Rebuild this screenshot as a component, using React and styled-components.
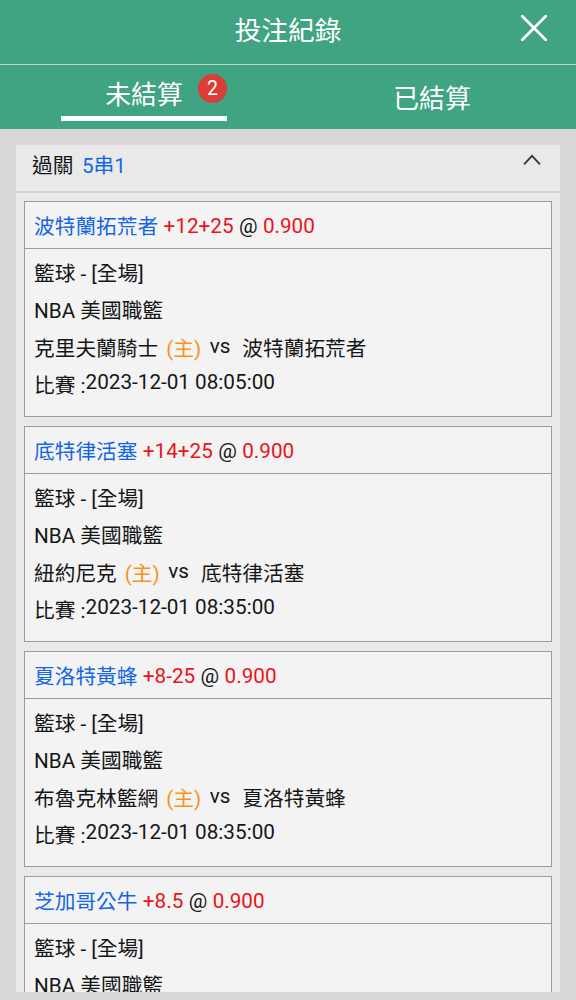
import React from 'react';
import styled, { createGlobalStyle } from 'styled-components';

const bets = [
  {
    id: 1,
    pick: '波特蘭拓荒者',
    handicap: '+12+25',
    odds: '0.900',
    home: '克里夫蘭騎士',
    time: '2023-12-01 08:05:00',
  },
  {
    id: 2,
    pick: '底特律活塞',
    handicap: '+14+25',
    odds: '0.900',
    home: '紐約尼克',
    time: '2023-12-01 08:35:00',
  },
  {
    id: 3,
    pick: '夏洛特黃蜂',
    handicap: '+8-25',
    odds: '0.900',
    home: '布魯克林籃網',
    time: '2023-12-01 08:35:00',
  },
  {
    id: 4,
    pick: '芝加哥公牛',
    handicap: '+8.5',
    odds: '0.900',
  },
];

const BetCard = ({ bet }) => {
  return (
    <StCard>
      <StCardTop>
        <StPick>{bet.pick}</StPick>
        <StText $color="#e8131b">{bet.handicap}</StText>
        <StText>@</StText>
        <StText $color="#e8131b">{bet.odds}</StText>
      </StCardTop>
      <StCardBody>
        <StLine>籃球 - [全場]</StLine>
        <StLine>NBA 美國職籃</StLine>
        {bet.home && (
          <StLine>
            {bet.home}
            <StHome>(主)</StHome>
            <StVs>vs</StVs>
            {bet.pick}
          </StLine>
        )}
        {bet.time && (
          <StLine>
            比賽 :<StTime>{bet.time}</StTime>
          </StLine>
        )}
      </StCardBody>
    </StCard>
  );
};

const App = () => {
  return (
    <StPage>
      <GlobalStyle />
      <StHeader>
        <StTitle>投注紀錄</StTitle>
        <StClose aria-label="close">
          <svg width="28" height="28" viewBox="0 0 28 28">
            <path d="M2.3 2.3L25.7 25.7M25.7 2.3L2.3 25.7" stroke="#fff" strokeWidth="2.7" strokeLinecap="round" />
          </svg>
        </StClose>
      </StHeader>
      <StTabs>
        <StTab $active>
          未結算
          <StBadge>2</StBadge>
        </StTab>
        <StTab>已結算</StTab>
      </StTabs>
      <StPanel>
        <StPanelTop>
          <span>過關</span>
          <StText $color="#1565e0">5串1</StText>
          <StArrow width="18" height="12" viewBox="0 0 18 12">
            <path d="M1 10.4L9 1.8L17 10.4" fill="none" stroke="#333" strokeWidth="1.7" />
          </StArrow>
        </StPanelTop>
        <StList>
          {bets.map((bet) => (
            <BetCard key={bet.id} bet={bet} />
          ))}
        </StList>
      </StPanel>
    </StPage>
  );
};

export default App;

const GlobalStyle = createGlobalStyle`
  * {
    box-sizing: border-box;
  }
  body {
    margin: 0;
    background-color: #d8d8d8;
    overflow: hidden;
  }
`;

const StPage = styled.div`
  display: flex;
  flex-direction: column;
  height: 100vh;
  padding-bottom: 8px;
  background-color: #d8d8d8;
  color: #161616;
  font-family: Roboto, 'Noto Sans CJK TC', sans-serif;
  font-size: 20.7px;
`;

const StHeader = styled.header`
  display: grid;
  grid-template-columns: 1fr auto 1fr;
  flex: none;
  height: 65px;
  padding-right: 28px;
  padding-left: 28px;
  background-color: #40a381;
  border-bottom: 1px solid #b5dccd;
`;

const StTitle = styled.h1`
  grid-column: 2;
  margin: 0;
  color: #fff;
  font-size: 26.7px;
  font-weight: 400;
  line-height: 62px;
`;

const StClose = styled.button`
  justify-self: end;
  align-self: start;
  display: flex;
  margin: 14px 0 0;
  padding: 0;
  border: 0;
  background: none;
  cursor: pointer;
`;

const StTabs = styled.nav`
  display: flex;
  justify-content: space-between;
  flex: none;
  height: 64px;
  padding: 0 61px;
  background-color: #40a381;
`;

const StTab = styled.div`
  position: relative;
  width: 166px;
  height: ${({ $active }) => ($active ? '56px' : '64px')};
  color: #fff;
  font-size: 25.8px;
  line-height: ${({ $active }) => ($active ? '60px' : '68px')};
  text-align: center;
  border-bottom: ${({ $active }) => ($active ? '5px solid #fff' : '0')};
`;

const StBadge = styled.span`
  position: absolute;
  top: 9px;
  right: 0;
  width: 29px;
  height: 29px;
  border-radius: 50%;
  background-color: #db3d39;
  font-size: 19.5px;
  line-height: 30px;
`;

const StPanel = styled.section`
  display: flex;
  flex-direction: column;
  flex: 1;
  min-height: 0;
  margin: 16px 16px 0;
  overflow: hidden;
  background-color: #e9e9e9;
`;

const StPanelTop = styled.div`
  display: flex;
  gap: 8.5px;
  flex: none;
  height: 48px;
  padding: 0 19px 0 16px;
  line-height: 43px;
  border-bottom: 2px solid #d3d3d3;
`;

const StArrow = styled.svg`
  margin-top: 9px;
  margin-left: auto;
`;

const StList = styled.div`
  display: flex;
  flex-direction: column;
  gap: 9px;
  padding: 8px;
`;

const StCard = styled.article`
  flex: none;
  height: 216px;
  border: 1px solid #9c9c9c;
  background-color: #f3f3f3;
`;

const StCardTop = styled.div`
  display: flex;
  gap: 5.4px;
  height: 47px;
  padding-left: 9px;
  line-height: 49px;
  border-bottom: 1px solid #9c9c9c;
`;

const StText = styled.span`
  color: ${({ $color }) => $color || 'inherit'};
`;

const StPick = styled.span`
  color: #1565e0;
  line-height: 50px;
`;

const StCardBody = styled.div`
  padding: 7px 9px 0;
`;

const StLine = styled.div`
  display: flex;
  height: 37.3px;
  line-height: 37.5px;
  white-space: pre;
`;

const StHome = styled.span`
  margin-left: 8px;
  color: #f6931d;
`;

const StVs = styled.span`
  margin: 0 12px 0 8.5px;
  line-height: 30px;
`;

const StTime = styled.span`
  line-height: 28px;
`;
